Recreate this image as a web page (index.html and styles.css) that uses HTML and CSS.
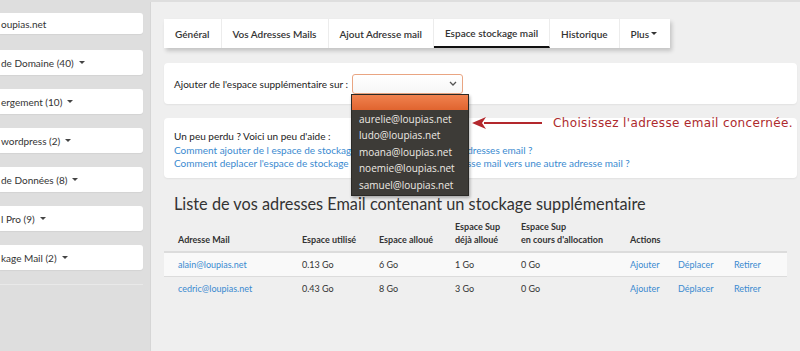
FILE: index.html
```html
<!DOCTYPE html>
<html lang="fr">

<head>
    <meta charset="UTF-8">
    <title>Espace stockage mail</title>
    <link rel="stylesheet" href="styles.css">
</head>

<body>
    <aside class="sidebar">
        <div class="side-item side-search">oupias.net</div>
        <div class="side-item">de Domaine (40) <span class="caret"></span></div>
        <div class="side-item">ergement (10) <span class="caret"></span></div>
        <div class="side-item">wordpress (2) <span class="caret"></span></div>
        <div class="side-item">de Données (8) <span class="caret"></span></div>
        <div class="side-item">l Pro (9) <span class="caret"></span></div>
        <div class="side-item">kage Mail (2) <span class="caret"></span></div>
        <hr class="side-rule">
    </aside>

    <main class="content">
        <nav class="tabs">
            <a class="tab">Général</a>
            <a class="tab">Vos Adresses Mails</a>
            <a class="tab">Ajout Adresse mail</a>
            <a class="tab active">Espace stockage mail</a>
            <a class="tab">Historique</a>
            <a class="tab">Plus <span class="caret"></span></a>
        </nav>

        <div class="card add-space">
            <label>Ajouter de l'espace supplémentaire sur :</label>
            <div class="select-wrap">
                <div class="select">
                    <svg class="chevron" width="8" height="5" viewBox="0 0 8 5"><path d="M1 1l3 3 3-3" fill="none" stroke="#555" stroke-width="1.3"/></svg>
                </div>
                <ul class="dropdown">
                    <li class="selected">&nbsp;</li>
                    <li>aurelie@loupias.net</li>
                    <li>ludo@loupias.net</li>
                    <li>moana@loupias.net</li>
                    <li>noemie@loupias.net</li>
                    <li>samuel@loupias.net</li>
                </ul>
            </div>
        </div>

        <div class="card help">
            <p>Un peu perdu ? Voici un peu d'aide :</p>
            <a href="#">Comment ajouter de l espace de stockage supplémentaire sur vos adresses email ?</a>
            <a href="#">Comment deplacer l'espace de stockage supplémentaire d'une adresse mail vers une autre adresse mail ?</a>
        </div>

        <h2 class="list-title">Liste de vos adresses Email contenant un stockage supplémentaire</h2>

        <table class="storage">
            <colgroup>
                <col style="width: 124px">
                <col style="width: 77px">
                <col style="width: 76px">
                <col style="width: 66px">
                <col style="width: 109px">
                <col style="width: 48px">
                <col style="width: 56px">
                <col>
            </colgroup>
            <thead>
                <tr>
                    <th>Adresse Mail</th>
                    <th>Espace utilisé</th>
                    <th>Espace alloué</th>
                    <th>Espace Sup<br>déjà alloué</th>
                    <th>Espace Sup<br>en cours d'allocation</th>
                    <th colspan="3">Actions</th>
                </tr>
            </thead>
            <tbody>
                <tr>
                    <td><a href="#">alain@loupias.net</a></td>
                    <td>0.13 Go</td>
                    <td>6 Go</td>
                    <td>1 Go</td>
                    <td>0 Go</td>
                    <td><a href="#">Ajouter</a></td>
                    <td><a href="#">Déplacer</a></td>
                    <td><a href="#">Retirer</a></td>
                </tr>
                <tr>
                    <td><a href="#">cedric@loupias.net</a></td>
                    <td>0.43 Go</td>
                    <td>8 Go</td>
                    <td>3 Go</td>
                    <td>0 Go</td>
                    <td><a href="#">Ajouter</a></td>
                    <td><a href="#">Déplacer</a></td>
                    <td><a href="#">Retirer</a></td>
                </tr>
            </tbody>
        </table>

        <div class="hint">
            <svg width="72" height="14" viewBox="0 0 72 14"><path d="M12 7H70" stroke="#b3282d" stroke-width="2.2"/><path d="M0 7L14 1L10 7L14 13Z" fill="#b3282d"/></svg>
            <span>Choisissez l'adresse email concernée.</span>
        </div>
    </main>
</body>

</html>
```

FILE: styles.css
```css
/* Base */
* {
    box-sizing: border-box;
}

body {
    margin: 0;
    height: 351px;
    overflow: hidden;
    display: flex;
    background: #dedede;
    font-family: 'Lato', 'Liberation Sans', sans-serif;
    color: #333;
}

a {
    color: #3a8ad0;
    text-decoration: none;
}

.caret {
    display: inline-block;
    width: 0;
    height: 0;
    margin-left: 2px;
    vertical-align: middle;
    border-top: 3px solid #444;
    border-left: 3px solid transparent;
    border-right: 3px solid transparent;
}

/* Sidebar */
.sidebar {
    width: 150px;
    flex-shrink: 0;
    padding: 13px 7px 0 0;
    display: flex;
    flex-direction: column;
    gap: 14px;
}

.side-item {
    height: 25px;
    padding-left: 1px;
    display: flex;
    align-items: center;
    gap: 3px;
    background: #fff;
    border-radius: 0 3px 3px 0;
    box-shadow: 0 1px 1px rgba(0, 0, 0, 0.05);
    font-size: 10px;
    color: #333;
    white-space: nowrap;
}

.side-search {
    height: 21px;
    margin-bottom: 2px;
}

.side-rule {
    margin: 0;
    border: none;
    border-top: 1px solid #e9e9e9;
}

/* Main */
.content {
    position: relative;
    flex: 1;
    margin-top: 2px;
    padding: 17px 3px 0 13px;
    background: #efefef;
    border-left: 1px solid #d6d6d6;
}

.tabs {
    display: inline-flex;
    height: 29px;
    background: #fff;
    box-shadow: 2px 3px 4px rgba(0, 0, 0, 0.18);
}

.tab {
    display: flex;
    align-items: center;
    padding: 0 11px;
    border-right: 1px solid #ececec;
    font-size: 10px;
    font-weight: 600;
    color: #333;
    white-space: nowrap;
}

.tab:last-child {
    border-right: none;
    padding-right: 13px;
}

.tab .caret {
    border-top-color: #333;
}

.tab.active {
    border-bottom: 2px solid #111;
}

.card {
    background: #fff;
    border-radius: 4px;
    box-shadow: 0 1px 2px rgba(0, 0, 0, 0.06);
}

.add-space {
    margin-top: 15px;
    height: 41px;
    padding: 0 10px;
    display: flex;
    align-items: center;
    gap: 4px;
    font-size: 10px;
    color: #222;
}

.select-wrap {
    position: relative;
}

.select {
    width: 111px;
    height: 20px;
    border: 1px solid #e9a582;
    border-radius: 3px;
    background: linear-gradient(#fff, #f6f6f6);
    display: flex;
    align-items: center;
    justify-content: flex-end;
    padding-right: 5px;
}

.dropdown {
    position: absolute;
    z-index: 5;
    top: 20px;
    left: -1px;
    width: 118px;
    margin: 0;
    padding: 0 0 2px;
    list-style: none;
    background: #3d3b37;
    border: 1px solid #2a2926;
    box-shadow: 1px 2px 3px rgba(0, 0, 0, 0.3);
    font-family: 'Open Sans', 'DejaVu Sans', sans-serif;
    font-size: 10px;
    color: #eeeae4;
}

.dropdown li {
    height: 16.5px;
    line-height: 16.5px;
    padding-left: 7px;
}

.dropdown li.selected {
    height: 15px;
    background: linear-gradient(#f0824f, #e0642f);
    margin-bottom: 1px;
}

.help {
    margin-top: 14px;
    height: 60px;
    padding: 12px 10px;
    font-size: 10px;
    line-height: 13px;
}

.help p {
    margin: 0 0 1px;
    color: #222;
}

.help a {
    display: block;
    white-space: nowrap;
}

.list-title {
    margin: 16px 0 0 10px;
    font-size: 16.3px;
    font-weight: 400;
    color: #333;
    white-space: nowrap;
}

/* Table */
.storage {
    width: 623px;
    margin-top: 7px;
    table-layout: fixed;
    border-collapse: collapse;
    font-size: 9px;
}

.storage th {
    text-align: left;
    font-weight: 700;
    color: #333;
    vertical-align: bottom;
    line-height: 13px;
    padding: 0 0 5px 14px;
    border-bottom: 2px solid #dcdcdc;
    white-space: nowrap;
}

.storage td {
    height: 24px;
    padding: 0 0 0 14px;
    border-bottom: 1px solid #dcdcdc;
    color: #333;
    white-space: nowrap;
}

.storage tbody tr:first-child {
    background: #f9f9f9;
}

.storage tbody tr:last-child td {
    border-bottom: none;
}

/* Annotation */
.hint {
    position: absolute;
    top: 114px;
    left: 321px;
    display: flex;
    align-items: center;
    gap: 9px;
    font-family: 'DejaVu Sans', sans-serif;
    font-size: 12px;
    letter-spacing: 0.35px;
    color: #ad2a2d;
    white-space: nowrap;
}
```
